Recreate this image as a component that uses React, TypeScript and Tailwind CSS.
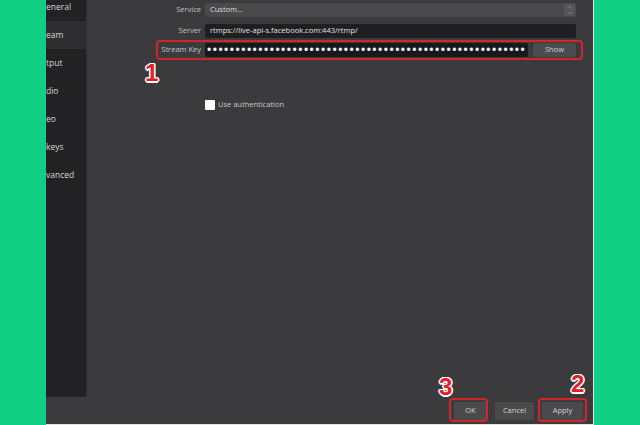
import { ChevronUp, ChevronDown } from 'lucide-react';

const navItems = ['eneral', 'eam', 'tput', 'dio', 'eo', 'keys', 'vanced'];

const outline =
  '[text-shadow:1.5px_0_0_#fff,-1.5px_0_0_#fff,0_1.5px_0_#fff,0_-1.5px_0_#fff,1px_1px_0_#fff,-1px_-1px_0_#fff,1px_-1px_0_#fff,-1px_1px_0_#fff]';

function Marker({ n, className }: { n: string; className: string }) {
  return (
    <span
      className={`absolute font-['Liberation_Sans',Arial,sans-serif] text-[24px] leading-none font-bold text-[#e3202a] ${outline} ${className}`}
    >
      {n}
    </span>
  );
}

export default function App() {
  const dots = '•'.repeat(56);

  return (
    <div className="flex h-[425px] w-[640px] overflow-hidden bg-[#10cf85] font-['Open_Sans',sans-serif]">
      <div className="w-[46px] shrink-0" />

      {/* settings window */}
      <div className="relative flex w-[548px] shrink-0 flex-col border-r border-b border-[#e4e4e4] bg-[#3b3a3c]">
        <div className="flex h-[397px]">
          {/* sidebar, mostly covered */}
          <div className="w-[41px] shrink-0 overflow-hidden border-r border-[#2f2e31] bg-[#222124]">
            <div className="-mt-[7px]">
              {navItems.map((item) => (
                <div
                  key={item}
                  className={`flex h-[28px] items-center text-[8.5px] text-[#d6d6d6] ${
                    item === 'eam' ? 'bg-[#2e2d30]' : ''
                  }`}
                >
                  {item}
                </div>
              ))}
            </div>
          </div>

          {/* stream form */}
          <div className="flex flex-1 flex-col pt-[3px] text-[7.5px]">
            <div className="flex h-[14px] items-center">
              <span className="w-[118px] pr-[4px] text-right text-[#c4c4c4]">Service</span>
              <div className="flex h-[14px] w-[371px] items-center rounded-[2px] bg-[#4a494c] pl-[5px] text-[#dcdcdc]">
                <span className="flex-1">Custom...</span>
                <span className="mr-[1px] flex h-[12px] w-[11px] flex-col items-center justify-center rounded-[2px] bg-[#555457] text-[#9a9a9a]">
                  <ChevronUp size={6} strokeWidth={2.5} />
                  <ChevronDown size={6} strokeWidth={2.5} />
                </span>
              </div>
            </div>

            <div className="mt-[7px] flex h-[14px] items-center">
              <span className="w-[118px] pr-[4px] text-right text-[#c4c4c4]">Server</span>
              <div className="flex h-[14px] w-[371px] items-center rounded-[2px] bg-[#1f1e21] pl-[5px] text-[#e2e2e2]">
                rtmps://live-api-s.facebook.com:443/rtmp/
              </div>
            </div>

            <div className="mt-[5px] flex h-[14px] items-center">
              <span className="w-[118px] pr-[4px] text-right text-[#c4c4c4]">Stream Key</span>
              <div className="flex h-[14px] w-[323px] items-center overflow-hidden rounded-[2px] bg-[#19181b] pl-[2px] font-['Liberation_Sans',sans-serif] text-[12px] tracking-[1.5px] text-[#f4f4f4]">
                {dots}
              </div>
              <button className="ml-[5px] h-[14px] w-[43px] rounded-[2px] bg-[#4c4b4e] text-[7.5px] text-[#cfcfcf]">
                Show
              </button>
            </div>

            <div className="mt-[42px] flex items-center pl-[118px]">
              <span className="h-[10px] w-[10px] rounded-[1px] bg-white" />
              <span className="ml-[3px] text-[#c8c8c8]">Use authentication</span>
            </div>
          </div>
        </div>

        {/* dialog buttons */}
        <div className="flex flex-1 items-center justify-end gap-[8px] pr-[10px] text-[7.5px] text-[#d2d2d2]">
          <button className="h-[18px] w-[33px] rounded-[2px] bg-[#4a494c]">OK</button>
          <button className="h-[18px] w-[39px] rounded-[2px] bg-[#4a494c]">Cancel</button>
          <button className="h-[18px] w-[41px] rounded-[2px] bg-[#4a494c]">Apply</button>
        </div>

        {/* annotations */}
        <div className="absolute top-[40px] left-[110px] h-[20px] w-[427px] rounded-[4px] border-2 border-[#d0262b]" />
        <div className="absolute top-[398px] left-[403px] h-[24px] w-[39px] rounded-[4px] border-2 border-[#d0262b]" />
        <div className="absolute top-[398px] left-[492px] h-[24px] w-[49px] rounded-[4px] border-2 border-[#d0262b]" />
        <Marker n="1" className="top-[61px] left-[99px]" />
        <Marker n="3" className="top-[375px] left-[393px]" />
        <Marker n="2" className="top-[372px] left-[525px]" />
      </div>

      <div className="flex-1" />
    </div>
  );
}
